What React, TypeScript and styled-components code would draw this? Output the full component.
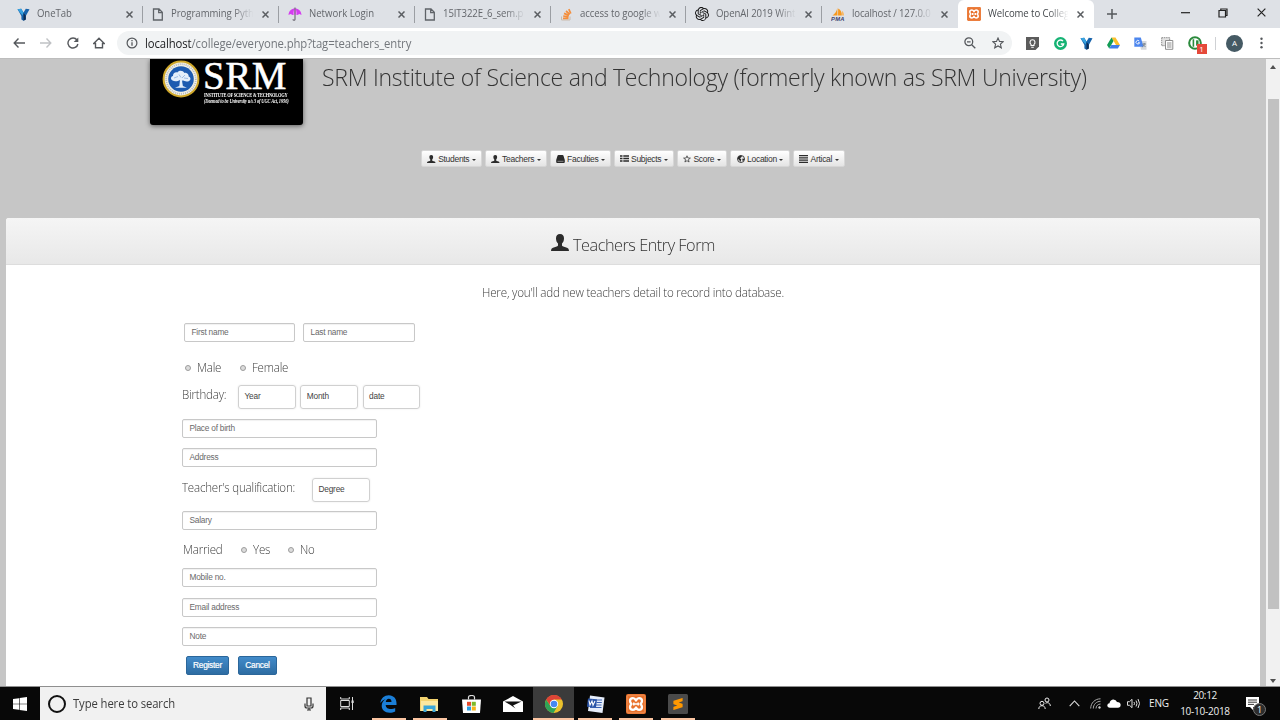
import React from 'react';
import styled, { createGlobalStyle } from 'styled-components';
import { SiOpenai, SiSublimetext } from 'react-icons/si';

const Global = createGlobalStyle`
  * { box-sizing: border-box; }
  body { margin: 0; background: #c6c6c6; overflow: hidden; font-family: "Open Sans", "Noto Sans", sans-serif; }
  svg { display: block; flex: none; }
`;

const Screen = styled.div`
  width: 1280px;
  height: 720px;
  display: flex;
  flex-direction: column;
  overflow: hidden;
`;

/* ---------- shared text ---------- */
const Text = styled.span<{ $size: number; $track?: number; $color?: string; $weight?: number; $narrow?: number }>`
  display: inline-block;
  transform: scaleX(${p => p.$narrow ?? 1});
  transform-origin: left center;
  font-size: ${p => p.$size}px;
  letter-spacing: ${p => p.$track ?? 0}px;
  color: ${p => p.$color ?? '#333'};
  font-weight: ${p => p.$weight ?? 400};
  white-space: nowrap;
  line-height: 1.3;
`;
const Slot = styled.div<{ $w: number; $bg?: string }>`
  flex: none;
  width: ${p => p.$w}px;
  height: 100%;
  display: flex;
  align-items: center;
  justify-content: center;
  background: ${p => p.$bg ?? 'transparent'};
`;

/* ---------- browser chrome ---------- */
const TabStrip = styled.div`
  flex: none;
  height: 28px;
  padding-left: 7.5px;
  background: #dee1e6;
  display: flex;
`;
const Tab = styled.div<{ $active?: boolean; $line?: boolean }>`
  position: relative;
  flex: none;
  width: 135.8px;
  height: 28px;
  display: flex;
  align-items: center;
  padding: 0 10px 0 9px;
  gap: 7px;
  background: ${p => (p.$active ? '#fff' : 'transparent')};
  border-radius: 6px 6px 0 0;
  &::after {
    content: '';
    position: absolute;
    right: 0;
    top: 6px;
    width: 1px;
    height: 17px;
    background: ${p => (p.$line ? '#9b9ea3' : 'transparent')};
  }
`;
const TabTitle = styled.div<{ $fade?: boolean }>`
  flex: 1;
  min-width: 0;
  padding-bottom: 1px;
  display: flex;
  mask-image: ${p => (p.$fade ? 'linear-gradient(90deg, #000 74%, transparent 98%)' : 'none')};
`;
const WindowButtons = styled.div`
  margin-left: auto;
  display: flex;
  padding-bottom: 3px;
`;
const Toolbar = styled.div`
  flex: none;
  height: 31px;
  background: #fff;
  border-bottom: 1px solid #bdbdbd;
  display: flex;
  align-items: center;
  padding-left: 5px;
`;
const AddressBar = styled.div`
  width: 899px;
  height: 24px;
  margin-left: 5px;
  margin-right: 6px;
  border-radius: 12px;
  background: #f1f3f4;
  display: flex;
  align-items: center;
  padding-left: 1px;
`;
const Url = styled.div`
  flex: 1;
  padding-bottom: 2px;
`;
const ExtDivider = styled.div`
  width: 1px;
  height: 13px;
  margin: 0 10px 0 7px;
  background: #cfd1d4;
`;
const Avatar = styled.div`
  width: 17px;
  height: 17px;
  border-radius: 50%;
  background: #455a64;
  display: flex;
  align-items: center;
  justify-content: center;
`;
const Badged = styled.div`
  position: relative;
  width: 14px;
  height: 14px;
`;
const Badge = styled.span`
  position: absolute;
  left: 9px;
  top: 8px;
  width: 10px;
  height: 10px;
  background: #e5493a;
  color: #fff;
  font-size: 8px;
  line-height: 10px;
  text-align: center;
`;

/* ---------- page ---------- */
const Viewport = styled.div`
  height: 627px;
  flex: none;
  display: flex;
`;
const Page = styled.div`
  width: 1266px;
  height: 627px;
  background: #c6c6c6;
  overflow: hidden;
  padding-left: 6px;
`;
const Header = styled.div`
  height: 91px;
  display: flex;
  padding-left: 144px;
`;
const Logo = styled.div`
  flex: none;
  width: 153px;
  height: 66px;
  background: #000;
  border-radius: 0 0 3px 3px;
  box-shadow: 0 1px 5px rgba(0, 0, 0, 0.55);
  display: flex;
  padding: 1px 0 0 12px;
  gap: 3px;
`;
const LogoWords = styled.div`
  display: flex;
  flex-direction: column;
  color: #fff;
  font-family: "Liberation Serif", serif;
  white-space: nowrap;
`;
const LogoBig = styled.span`
  font-size: 39px;
  line-height: 32px;
  letter-spacing: 0.5px;
  -webkit-text-stroke: 0.5px #fff;
`;
const LogoLine = styled.span<{ $italic?: boolean }>`
  width: 96px;
  margin-left: 1px;
  transform: scaleX(${p => (p.$italic ? 0.84 : 0.83)});
  transform-origin: left center;
  font-size: 5.3px;
  line-height: 6px;
  font-weight: 700;
  font-style: ${p => (p.$italic ? 'italic' : 'normal')};
  letter-spacing: ${p => (p.$italic ? -0.16 : -0.22)}px;
`;
const SiteTitle = styled.div`
  margin: 2px 0 0 19px;
`;
const Nav = styled.div`
  height: 68px;
  display: flex;
  gap: 2.9px;
  padding-left: 415px;
`;
const NavButton = styled.div<{ $w: number }>`
  flex: none;
  width: ${p => p.$w}px;
  height: 17px;
  border-radius: 2px;
  background: linear-gradient(#fff, #e4e4e4);
  border: 1px solid #d6d6d6;
  display: flex;
  align-items: center;
  justify-content: center;
  gap: 2.5px;
  color: #333;
  font: 8.5px "Liberation Sans", Arial, sans-serif;
  letter-spacing: -0.3px;
  white-space: nowrap;
`;
const Caret = styled.i`
  border: 2.5px solid transparent;
  border-top-color: #333;
  border-bottom: 0;
  margin-top: 2px;
`;
const Panel = styled.div`
  width: 1254px;
  height: 470px;
  background: #fff;
  border-radius: 3px 3px 0 0;
  overflow: hidden;
`;
const PanelHeading = styled.div`
  height: 47px;
  background: linear-gradient(#f5f5f5, #e8e8e8);
  border-bottom: 1px solid #ddd;
  display: flex;
  align-items: flex-start;
  gap: 4px;
  padding: 16px 0 0 545px;
`;
const Intro = styled.div`
  height: 58px;
  padding: 20px 0 0 476px;
  display: flex;
`;
const Form = styled.div`
  padding-left: 176px;
`;
const Row = styled.div<{ $h: number; $mb: number; $indent?: number }>`
  height: ${p => p.$h}px;
  margin-bottom: ${p => p.$mb}px;
  padding-left: ${p => p.$indent ?? 0}px;
  display: flex;
`;
const Field = styled.div<{ $w?: number }>`
  width: ${p => p.$w ?? 195}px;
  height: 19px;
  border: 1px solid #c8c8c8;
  border-radius: 2px;
  box-shadow: inset 0 1px 1px rgba(0, 0, 0, 0.06);
  padding-left: 6.5px;
  color: #6a6a6a;
  font: 8.3px/17px "Liberation Sans", Arial, sans-serif;
  letter-spacing: -0.22px;
  white-space: nowrap;
`;
const Picker = styled.div`
  width: 57.5px;
  height: 23.5px;
  margin-right: 4.8px;
  border: 1px solid #d0d0d0;
  border-radius: 3px;
  box-shadow: 0 0 2px rgba(0, 0, 0, 0.1);
  padding-left: 5.5px;
  color: #444;
  font: 8.3px/21.5px "Liberation Sans", Arial, sans-serif;
  letter-spacing: -0.2px;
`;
const FormLabel = styled.div<{ $w: number }>`
  width: ${p => p.$w}px;
  line-height: 1;
`;
const Radio = styled.i`
  width: 6px;
  height: 6px;
  margin: 7px 6px 0 0;
  border: 1px solid #9d9d9d;
  border-radius: 50%;
  background: #dcdcdc;
  flex: none;
`;
const Action = styled.div<{ $w: number }>`
  width: ${p => p.$w}px;
  height: 19px;
  margin-right: 9px;
  border-radius: 2px;
  border: 1px solid #2b669a;
  background: linear-gradient(#428bca, #2d6ca2);
  color: #fff;
  font: 8.3px/17px "Liberation Sans", Arial, sans-serif;
  letter-spacing: -0.25px;
  -webkit-text-stroke: 0.2px #fff;
  text-align: center;
`;
const ScrollBar = styled.div`
  width: 14px;
  height: 627px;
  background: #f1f1f1;
  display: flex;
  flex-direction: column;
  align-items: center;
  padding: 6px 0 3px;
`;
const ScrollArrow = styled.i<{ $up?: boolean }>`
  border: 3px solid transparent;
  border-top: ${p => (p.$up ? '0' : '4px solid #505050')};
  border-bottom: ${p => (p.$up ? '4px solid #505050' : '0')};
`;
const ScrollThumb = styled.div`
  width: 11px;
  height: 510px;
  margin: 30px 0 auto;
  background: #c1c1c1;
`;

/* ---------- taskbar ---------- */
const TaskBar = styled.div`
  height: 34px;
  flex: none;
  background: #080808;
  border-top: 1px solid #8f8f8f;
  display: flex;
`;
const SearchBox = styled.div`
  width: 286px;
  background: #f1f1f1;
  display: flex;
  align-items: center;
  padding-left: 8px;
`;
const SearchText = styled.div`
  flex: 1;
  padding-bottom: 3px;
`;
const Cortana = styled.i`
  width: 18px;
  height: 18px;
  border: 2.6px solid #111;
  border-radius: 50%;
  margin-right: 7px;
`;
const TaskItem = styled.div<{ $open?: boolean; $active?: boolean }>`
  position: relative;
  width: 41.3px;
  height: 33px;
  display: flex;
  align-items: center;
  justify-content: center;
  background: ${p => (p.$active ? '#3b3b3b' : 'transparent')};
  &::after {
    content: '';
    position: absolute;
    bottom: 0;
    left: ${p => (p.$active ? 0 : 3.6)}px;
    right: ${p => (p.$active ? 0 : 3.6)}px;
    height: 2px;
    background: ${p => (p.$open ? '#fbc5a2' : 'transparent')};
  }
`;
const Tray = styled.div`
  margin-left: auto;
  margin-right: 6px;
  display: flex;
  height: 33px;
`;
const Clock = styled.div`
  width: 54px;
  display: flex;
  flex-direction: column;
  align-items: center;
  padding-top: 2px;
  gap: 2.5px;
`;
const NoticeWrap = styled.div`
  position: relative;
  width: 14px;
  height: 13px;
`;
const NoticeCount = styled.span`
  position: absolute;
  left: 7px;
  top: 6px;
  width: 13px;
  height: 13px;
  border: 1px solid #777;
  border-radius: 50%;
  background: #2d2d2d;
  color: #fff;
  font-size: 9px;
  line-height: 11px;
  text-align: center;
`;

/* ---------- icons ---------- */
const Cross = ({ s = 7, c = '#5a5d61', w = 1.5 }: { s?: number; c?: string; w?: number }) => (
  <svg width={s} height={s} viewBox="0 0 7 7"><path d="M.5 .5l6 6M6.5 .5l-6 6" stroke={c} strokeWidth={w} /></svg>
);
const YIcon = () => (
  <svg width="13" height="13" viewBox="0 0 13 13">
    <path d="M.5 1.200L4.200 .8 6.500 4.500 8.800 .8 12.500 1.200 8.800 8v3.600L6.500 12.700 4.400 11.500V8z" fill="#1763ab" />
    <path d="M.5 1.200L4.200 .8 6.500 4.700 5.500 7.500z" fill="#38a3e0" />
    <path d="M6.500 5l2.300 2.500v4.100L6.500 12.700z" fill="#0c2c55" />
  </svg>
);
const PageIcon = () => (
  <svg width="12" height="13" viewBox="0 0 12 13">
    <path d="M1.500 1h5.500l3.300 3.300V12H1.500zM6.700 1v3.600h3.600" fill="none" stroke="#5f6368" strokeWidth="1.300" />
  </svg>
);
const Umbrella = () => (
  <svg width="14" height="14" viewBox="0 0 14 14">
    <path d="M.5 8C.8 4 3.500 1.600 7 1.600S13.200 4 13.500 8l-2-1-2.200 1L7 7 4.700 8 2.500 7z" fill="#d43df0" />
    <path d="M5 7.500C5 4.500 6 2.500 7 1.600 8 2.500 9 4.500 9 7.500L7 7z" fill="#f07bff" />
    <path d="M7 .6V12.200c0 1.400-2 1.300-2 0" fill="none" stroke="#6a6670" strokeWidth="1.100" />
  </svg>
);
const StackIcon = () => (
  <svg width="13" height="13" viewBox="0 0 13 13" fill="none">
    <path d="M1.500 8.500V12h8.500V8.500" stroke="#c9bcae" strokeWidth="1" />
    <path d="M3 10.300h5.500M3.200 8l5.400 .8M4 5.400l5 2M6 3l3.800 3.400M8.800 1.200l2 4.300" stroke="#f48e3c" strokeWidth="1.700" />
  </svg>
);
const PmaIcon = () => (
  <svg width="14" height="14" viewBox="0 0 14 14">
    <path d="M6.300 .8C6 4 4 7 1.500 8.400h5zM7.200 1.500c2.800 1.500 3.800 4 3.600 6.900H7z" fill="#f7981d" />
    <path d="M11 4c1.500 1 2 2.600 1.900 4.400h-1.700z" fill="#f9b55c" />
    <text x="0" y="13.600" fontSize="5.800" fontWeight="700" fontStyle="italic" fontFamily="Liberation Sans" fill="#3b3f70" textLength="13.500">PMA</text>
  </svg>
);
const XamppIcon = ({ s }: { s: number }) => (
  <svg width={s} height={s} viewBox="0 0 20 20">
    <rect width="20" height="20" rx="2" fill="#e9712b" />
    <rect x="1.200" y="1.200" width="17.600" height="17.600" rx="1.500" fill="none" stroke="#f3a271" strokeWidth=".6" />
    <path d="M7 4.200C4.800 4.200 4 5.600 4 7c0 1.300.7 2.200 1.500 3C4.700 10.800 4 11.700 4 13c0 1.400.8 2.800 3 2.800 1.700 0 2.300-1.200 3-2.300.7 1.100 1.300 2.300 3 2.300 2.200 0 3-1.400 3-2.800 0-1.300-.7-2.200-1.500-3 .8-.8 1.500-1.700 1.500-3 0-1.400-.8-2.800-3-2.800-1.700 0-2.300 1.200-3 2.300-.7-1.100-1.300-2.300-3-2.300z" fill="none" stroke="#fff" strokeWidth="2.300" strokeLinejoin="round" />
    <path d="M7.800 10h4.400M7.800 8.600v2.800M12.200 8.600v2.800" stroke="#fff" strokeWidth="1.500" />
  </svg>
);
const Person = ({ w, h, c = '#2b2b2b' }: { w: number; h: number; c?: string }) => (
  <svg width={w} height={h} viewBox="0 0 18 17" fill={c}>
    <path d="M9 0C6.300 0 5 1.800 5 4.300c0 2.300.8 4.300 2 5.300v1.600c0 .7-.5 1-1.300 1.300L2 13.800C.6 14.300.2 15 0 17h18c-.2-2-.6-2.700-2-3.200l-3.700-1.300c-.8-.3-1.300-.6-1.300-1.300V9.600c1.200-1 2-3 2-5.300C13 1.800 11.700 0 9 0z" />
  </svg>
);
const NavIcon = ({ kind }: { kind: string }) => {
  if (kind === 'user') return <Person w={8.5} h={8} />;
  if (kind === 'book') return (
    <svg width="9" height="8" viewBox="0 0 9 8"><path d="M2.500 0h4q.8 0 1 .8L8.800 5v2q0 1-1 1H1.200q-1 0-1-1V5L1.500 .8Q1.700 0 2.500 0z" fill="#2b2b2b" /><path d="M1.500 6.300h6" stroke="#ccc" strokeWidth=".6" /></svg>
  );
  if (kind === 'list') return (
    <svg width="9" height="7" viewBox="0 0 9 7"><path d="M0 1h2.500M3.300 1H9M0 3.500h2.500M3.300 3.500H9M0 6h2.500M3.300 6H9" stroke="#2b2b2b" strokeWidth="1.600" /></svg>
  );
  if (kind === 'star') return (
    <svg width="8" height="8" viewBox="0 0 8 8"><path d="M4 .8l.9 2.200 2.500.1-2 1.500.7 2.400L4 5.700 1.900 7l.7-2.400-2-1.500 2.500-.1z" fill="none" stroke="#333" strokeWidth=".75" /></svg>
  );
  if (kind === 'globe') return (
    <svg width="8" height="8" viewBox="0 0 8 8"><circle cx="4" cy="4" r="3.500" fill="#eee" stroke="#2b2b2b" strokeWidth=".9" /><path d="M1 2l2-1.500 2 .5-.7 1.200L3 3.200l1.300 1L3.500 7 2.200 5 .6 3.600zM5.500 3.500l2 .5L6 6.500 5.300 5z" fill="#2b2b2b" /></svg>
  );
  return <svg width="9" height="8" viewBox="0 0 9 8"><path d="M0 .7h9M0 2.900h9M0 5.100h9M0 7.300h9" stroke="#2b2b2b" strokeWidth="1.200" /></svg>;
};
const Seal = () => (
  <svg width="38" height="38" viewBox="0 0 38 38">
    <circle cx="19" cy="19" r="17.400" fill="#f4f1e4" stroke="#cfa72a" strokeWidth="2" />
    <circle cx="19" cy="19" r="14.800" fill="none" stroke="#b4bac4" strokeWidth="1.800" strokeDasharray="1 1" />
    <circle cx="19" cy="19" r="12.800" fill="#1d5bb0" />
    <path d="M18 20c-3 2-8.500 1.500-9-1.200-.3-1.600 1-2.500 2-2.700-.3-3 2.500-4.300 4.300-3.600 1.500-2.600 6-2.300 7 .4 2.400-.3 4.800 1.500 4.300 3.700 2 .5 2.600 3.300.6 4.300-2 .9-4.700.6-6.700-.6l-.4 1.200.8 4.600 4 1.600H13l4.300-1.800z" fill="#e3eefa" />
    <path d="M12 18l4-1.500M17 14.500l2 3M23 15l-3 3M26 18.500l-4-.5" stroke="#6f9bd4" strokeWidth=".6" />
  </svg>
);

const tabs = [
  { t: 'OneTab', icon: <YIcon />, track: -0.1 },
  { t: 'Programming Pyth', icon: <PageIcon />, fade: true, track: -0.05 },
  { t: 'Network Login', icon: <Umbrella />, track: 0 },
  { t: '15IT322E_6_sem.p', icon: <PageIcon />, fade: true, track: -0.1 },
  { t: 'access to google w', icon: <StackIcon />, fade: true, track: -0.1 },
  { t: 'OpenAI 2019 Wint', icon: <SiOpenai size={14} color="#111" />, fade: true, track: -0.1 },
  { t: 'localhost / 127.0.0', icon: <PmaIcon />, fade: true, track: -0.15 },
];
const navItems: [string, string, number][] = [
  ['Students', 'user', 61], ['Teachers', 'user', 62], ['Faculties', 'book', 61], ['Subjects', 'list', 60],
  ['Score', 'star', 50.5], ['Location', 'globe', 60], ['Artical', 'lines', 52],
];

const FieldRow = ({ label, mb }: { label: string; mb: number }) => (
  <Row $h={19} $mb={mb}><Field>{label}</Field></Row>
);
const Label = ({ children }: { children: string }) => (
  <Text $size={12.4} $weight={300} $track={-0.2} $narrow={0.93} $color="#3c3c3c">{children}</Text>
);

export default function App() {
  return (
    <Screen>
      <Global />
      <TabStrip>
        {tabs.map((t, i) => (
          <Tab key={i} $line={i < 6}>
            {t.icon}
            <TabTitle $fade={t.fade}><Text $size={10} $track={t.track} $narrow={0.96} $color="#63666b">{t.t}</Text></TabTitle>
            <Cross />
          </Tab>
        ))}
        <Tab $active>
          <XamppIcon s={14} />
          <TabTitle $fade><Text $size={10} $track={-0.1} $narrow={0.96} $color="#45494d">Welcome to Colleg</Text></TabTitle>
          <Cross />
        </Tab>
        <Slot $w={36}><svg width="10" height="10" viewBox="0 0 10 10"><path d="M5 0v10M0 5h10" stroke="#55585c" strokeWidth="1.500" /></svg></Slot>
        <WindowButtons>
          <Slot $w={38}><svg width="9" height="2"><path d="M0 .7h9" stroke="#222" strokeWidth="1.200" /></svg></Slot>
          <Slot $w={38}><svg width="10" height="10" viewBox="0 0 10 10"><path d="M1 2.500h6.500V9H1zM2.800 2.300V1H9v6.500H7.700" fill="none" stroke="#222" strokeWidth="1.200" /></svg></Slot>
          <Slot $w={38}><Cross s={9} c="#222" w={0.9} /></Slot>
        </WindowButtons>
      </TabStrip>
      <Toolbar>
        <Slot $w={27}><svg width="12" height="10" viewBox="0 0 12 10"><path d="M5.500 .6L1.200 5l4.300 4.400M1.400 5H12" fill="none" stroke="#55585c" strokeWidth="1.400" /></svg></Slot>
        <Slot $w={27}><svg width="12" height="10" viewBox="0 0 12 10"><path d="M6.500 .6L10.800 5 6.500 9.400M10.600 5H0" fill="none" stroke="#c0c2c5" strokeWidth="1.400" /></svg></Slot>
        <Slot $w={27}><svg width="12" height="12" viewBox="0 0 12 12"><path d="M10 3A5 5 0 1 0 10.900 7" fill="none" stroke="#55585c" strokeWidth="1.400" /><path d="M11.300 .5v4.600H6.700z" fill="#55585c" /></svg></Slot>
        <Slot $w={26}><svg width="12" height="12" viewBox="0 0 12 12"><path d="M.7 6.500L6 1.200l5.300 5.300H9.500v4.300h-7V6.500z" fill="none" stroke="#55585c" strokeWidth="1.400" /></svg></Slot>
        <AddressBar>
          <Slot $w={27}><svg width="12" height="12" viewBox="0 0 12 12"><circle cx="6" cy="6" r="4.900" fill="none" stroke="#55585c" strokeWidth="1.200" /><path d="M6 5.300v3.400M6 3.100v1.200" stroke="#55585c" strokeWidth="1.300" /></svg></Slot>
          <Url><Text $size={12} $track={-0.1} $narrow={0.943} $color="#73777c"><Text as="b" $size={12} $track={-0.1} $color="#202124">localhost</Text>/college/everyone.php?tag=teachers_entry</Text></Url>
          <Slot $w={28}><svg width="12" height="12" viewBox="0 0 12 12"><circle cx="4.800" cy="4.800" r="3.900" fill="none" stroke="#55585c" strokeWidth="1.300" /><path d="M7.700 7.700l3.600 3.600M3 4.800h3.600" stroke="#55585c" strokeWidth="1.300" /></svg></Slot>
          <Slot $w={28}><svg width="12" height="12" viewBox="0 0 12 12"><path d="M6 1l1.500 3.400 3.700.3-2.800 2.500.9 3.600L6 8.900l-3.300 1.900.9-3.600L.8 4.700l3.700-.3z" fill="none" stroke="#55585c" strokeWidth="1.100" /></svg></Slot>
        </AddressBar>
        <Slot $w={29}><svg width="13" height="13" viewBox="0 0 13 13"><path d="M0 0h13v9.500L9.500 13H0z" fill="#5b5b5b" /><path d="M5 8.500V7.400C3.300 6 3.800 2.700 6.500 2.700S9.700 6 8 7.400v1.100zM5.200 10.300h2.600" fill="none" stroke="#fff" strokeWidth="1.100" /></svg></Slot>
        <Slot $w={26}><svg width="13" height="13" viewBox="0 0 13 13"><circle cx="6.500" cy="6.500" r="6.500" fill="#15b374" /><path d="M9 4.200A3.300 3.300 0 1 0 9.700 7H6.800" fill="none" stroke="#fff" strokeWidth="1.300" /></svg></Slot>
        <Slot $w={27}><YIcon /></Slot>
        <Slot $w={27}><svg width="13" height="12" viewBox="0 0 13 12"><path d="M4.500 .5h4L13 8H9z" fill="#fbc02d" /><path d="M4.500 .5L6.500 4 2.200 11.500 0 8z" fill="#129c55" /><path d="M4.300 8H13l-2.200 3.500H2.300z" fill="#3f7de8" /></svg></Slot>
        <Slot $w={27}><svg width="13" height="13" viewBox="0 0 13 13"><path d="M5 4h7.500v8.700H7z" fill="#d5d8dc" /><path d="M.3.5h6.500l2.700 9.300H.3z" fill="#4c86ee" /><path d="M5.200 4A1.800 1.800 0 1 0 5.600 5.700H4" fill="none" stroke="#fff" strokeWidth=".9" /><path d="M8.500 7h3.500M10.200 6v1c0 1-1 2.500-2 3M9 7.500l2.500 2.500" stroke="#6b7784" strokeWidth=".8" fill="none" /></svg></Slot>
        <Slot $w={27}><svg width="13" height="13" viewBox="0 0 13 13"><path d="M.7.7h8v8h-8z" fill="#e2e2e2" stroke="#8d8d8d" strokeDasharray="1.500 .7" /><path d="M4.500 3.500h7.300v8.800H4.500z" fill="#fff" stroke="#8d8d8d" /><path d="M6 6h4.500M6 8h4.500M6 10h4.500" stroke="#8d8d8d" /></svg></Slot>
        <Slot $w={27}><Badged><svg width="14" height="14" viewBox="0 0 13 13"><circle cx="6.500" cy="6.500" r="5.400" fill="#fff" stroke="#2b8a3c" strokeWidth="1.900" /><path d="M5 3v7" stroke="#2b8a3c" strokeWidth="1.500" /><path d="M7.500 4h2.300v5H7.500z" fill="#2b8a3c" /></svg><Badge>1</Badge></Badged></Slot>
        <ExtDivider />
        <Avatar><Text $size={8} $color="#fff">A</Text></Avatar>
        <Slot $w={37}><svg width="3" height="12" viewBox="0 0 3 12" fill="#55585c"><circle cx="1.500" cy="1.700" r="1.200" /><circle cx="1.500" cy="6" r="1.200" /><circle cx="1.500" cy="10.300" r="1.200" /></svg></Slot>
      </Toolbar>

      <Viewport>
        <Page>
          <Header>
            <Logo>
              <Seal />
              <LogoWords>
                <LogoBig>SRM</LogoBig>
                <LogoLine>INSTITUTE OF SCIENCE &amp; TECHNOLOGY</LogoLine>
                <LogoLine $italic>(Deemed to be University u/s 3 of UGC Act, 1956)</LogoLine>
              </LogoWords>
            </Logo>
            <SiteTitle><Text $size={24.5} $weight={300} $track={-0.3} $narrow={0.94}>SRM Institute of Science and Technology (formerly known as SRM University)</Text></SiteTitle>
          </Header>
          <Nav>
            {navItems.map(([t, k, w]) => (
              <NavButton key={t} $w={w}><NavIcon kind={k} />{t}<Caret /></NavButton>
            ))}
          </Nav>
          <Panel>
            <PanelHeading>
              <Person w={18} h={17} />
              <Text $size={17} $weight={300} $track={-0.5} $narrow={0.957}>Teachers Entry Form</Text>
            </PanelHeading>
            <Intro><Text $size={12.4} $weight={300} $track={-0.2} $narrow={0.938} $color="#3c3c3c">Here, you'll add new teachers detail to record into database.</Text></Intro>
            <Form>
              <Row $h={18} $mb={17} $indent={2}>
                <Field $w={111}>First name</Field>
                <Slot $w={8} />
                <Field $w={112}>Last name</Field>
              </Row>
              <Row $h={20} $mb={7} $indent={3}>
                <Radio /><FormLabel $w={43}><Label>Male</Label></FormLabel>
                <Radio /><FormLabel $w={40}><Label>Female</Label></FormLabel>
              </Row>
              <Row $h={24} $mb={10}>
                <FormLabel $w={56}><Label>Birthday:</Label></FormLabel>
                <Picker>Year</Picker><Picker>Month</Picker><Picker>date</Picker>
              </Row>
              <FieldRow label="Place of birth" mb={10} />
              <FieldRow label="Address" mb={11} />
              <Row $h={24} $mb={9}>
                <FormLabel $w={130}><Label>Teacher's qualification:</Label></FormLabel>
                <Picker>Degree</Picker>
              </Row>
              <FieldRow label="Salary" mb={10} />
              <Row $h={20} $mb={8} $indent={1}>
                <FormLabel $w={58}><Label>Married</Label></FormLabel>
                <Radio /><FormLabel $w={35}><Label>Yes</Label></FormLabel>
                <Radio /><FormLabel $w={30}><Label>No</Label></FormLabel>
              </Row>
              <FieldRow label="Mobile no." mb={11} />
              <FieldRow label="Email address" mb={10} />
              <FieldRow label="Note" mb={10} />
              <Row $h={19} $mb={0} $indent={4}>
                <Action $w={43}>Register</Action>
                <Action $w={39}>Cancel</Action>
              </Row>
            </Form>
          </Panel>
        </Page>
        <ScrollBar><ScrollArrow $up /><ScrollThumb /><ScrollArrow /></ScrollBar>
      </Viewport>

      <TaskBar>
        <Slot $w={40}><svg width="14" height="14" viewBox="0 0 14 14" fill="#fff"><path d="M0 2l6-.8v5.500H0zM6.600 1.100L14 0v6.700H6.600zM0 7.300h6v5.500L0 12zM6.600 7.300H14V14l-7.400-1.100z" /></svg></Slot>
        <SearchBox>
          <Cortana />
          <SearchText><Text $size={12} $track={-0.1} $narrow={0.94} $color="#3c3c3c">Type here to search</Text></SearchText>
          <Slot $w={34}><svg width="10" height="14" viewBox="0 0 10 14"><path d="M3 1h4v8H3zM1 6.500V9q0 2 2 2h4q2 0 2-2V6.500M5 11v2.500M3 13h4" fill="none" stroke="#333" strokeWidth="1.200" /></svg></Slot>
        </SearchBox>
        <Slot $w={42}><svg width="14" height="13" viewBox="0 0 14 13"><path d="M.7 3.500h8.600v6H.7zM.7 0v2h8.600V0M.7 13v-2h8.600v2M12.500 0v13" fill="none" stroke="#ddd" strokeWidth="1" /><path d="M11.500 3.500h2.200v2.500h-2.200z" fill="#ddd" /></svg></Slot>
        <TaskItem $open><svg width="17" height="18" viewBox="0 0 17 18"><path d="M.3 8C1 3.300 4.300.3 8.800.3c5 0 7.700 3.700 7.700 7.800v2H5.700c.2 3 2.500 4 5 4 1.700 0 3.300-.5 4.500-1.200v3.600c-1.500.9-3.500 1.300-5.500 1.300-5 0-8-3-8-7 0-3 1.700-5.500 4-6.600C3.500 4.800 1.700 6 .3 8zm5.500-1h5.700c0-2-1-3.200-2.700-3.200S6 5.200 5.800 7z" fill="#1b7fd8" /></svg></TaskItem>
        <TaskItem $open><svg width="19" height="16" viewBox="0 0 19 16"><path d="M0 1h7l1.500 2H18v12H0z" fill="#f3d36f" /><path d="M1 5h17v10H1z" fill="#fbe8a0" /><path d="M3.500 9.500h12V16h-3v-3H6.500v3h-3z" fill="#3aa6d8" /></svg></TaskItem>
        <TaskItem><svg width="19" height="18" viewBox="0 0 19 18"><path d="M0 4.500h19L18 18H1z" fill="#fff" /><path d="M6.500 4.500V2q0-1.500 3-1.500t3 1.500v2.500" fill="none" stroke="#ddd" strokeWidth="1.200" /><path d="M5 6.800h4v4H5z" fill="#e5492b" /><path d="M9.800 6.800h4v4h-4z" fill="#7db927" /><path d="M5 11.500h4v4H5z" fill="#2a9de0" /><path d="M9.800 11.500h4v4h-4z" fill="#f5b51b" /></svg></TaskItem>
        <TaskItem><svg width="20" height="16" viewBox="0 0 20 16"><path d="M0 5.500L10 0l10 5.500V16H0z" fill="#fff" /><path d="M1.500 5.500h17L10 9.500l2.500 3-5-3.500z" fill="#111" /></svg></TaskItem>
        <TaskItem $open $active><svg width="18" height="18" viewBox="0 0 18 18"><circle cx="9" cy="9" r="9" fill="#eac12d" /><path d="M1.200 4.500A9 9 0 0 0 8.500 18L12.500 11H5.500z" fill="#2fa457" /><path d="M9 4.500h7.800A9 9 0 0 0 1.200 4.500L5.500 11z" fill="#dc4437" /><circle cx="9" cy="9" r="4.200" fill="#fff" /><circle cx="9" cy="9" r="3.300" fill="#4688f1" /></svg></TaskItem>
        <TaskItem $open><svg width="19" height="18" viewBox="0 0 19 18"><path d="M4 .5L18.500 2.500 16.500 18 2 16z" fill="#e7eefb" /><path d="M10.500 5h5.500M10.500 7.500h5.300M9.500 10h6M4 12.500h11.500" stroke="#3b63b5" strokeWidth="1.100" /><path d="M2 3.500l9 .8-1 8.200-9-.8z" fill="#2b55a8" /><path d="M3 5.500l1 4.500 2-4 1 4.300 2-4.300" fill="none" stroke="#fff" strokeWidth="1.100" /></svg></TaskItem>
        <TaskItem $open><XamppIcon s={20} /></TaskItem>
        <TaskItem $open><svg width="20" height="20" viewBox="0 0 20 20"><rect width="20" height="20" rx="1.500" fill="#4a4a4a" /><g transform="translate(4 4) scale(.5)"><SiSublimetext size={24} color="#ff9800" /></g></svg></TaskItem>
        <Tray>
          <Slot $w={30}><svg width="13" height="13" viewBox="0 0 13 13" fill="none" stroke="#eee"><circle cx="9" cy="3" r="2" /><circle cx="4" cy="6.300" r="2" /><path d="M.8 12c0-2 1.200-3.300 3.200-3.300S7.200 10 7.200 12M7.500 6.300c2.500-1.500 4.800 0 4.800 2.700" /></svg></Slot>
          <Slot $w={30}><svg width="11" height="7" viewBox="0 0 11 7"><path d="M.7 6.200L5.500 1l4.800 5.200" fill="none" stroke="#ddd" strokeWidth="1.100" /></svg></Slot>
          <Slot $w={13}><svg width="11" height="11" viewBox="0 0 11 11" fill="none" stroke="#aaa"><path d="M.7 10.500C.7 5 5 .8 10.500 .8M3.300 10.500c0-4 3.200-7.200 7.200-7.200M6 10.500C6 8 8 6 10.500 6" /><circle cx="9.500" cy="9.500" r=".9" fill="#ddd" /></svg></Slot>
          <Slot $w={24}><svg width="14" height="9" viewBox="0 0 14 9"><path d="M3 8.800Q.3 8.600.3 6.300 .5 4.300 2.500 4.200 3 1 6 .5q3-.2 4 2.600 3.500.2 3.700 3 0 2.500-2.500 2.700z" fill="#fff" /></svg></Slot>
          <Slot $w={14}><svg width="13" height="11" viewBox="0 0 13 11" fill="none" stroke="#ddd"><path d="M.5 3.700h2L5 1.300v8.400L2.500 7.300h-2zM7 4q1 1.500 0 3M9 2.500q2 3 0 6M11 1q3 4.500 0 9" /></svg></Slot>
          <Slot $w={38}><Text $size={10} $track={-0.1} $color="#eee">ENG</Text></Slot>
          <Clock>
            <Text $size={10} $track={-0.35} $color="#eee">20:12</Text>
            <Text $size={10} $track={-0.25} $color="#eee">10-10-2018</Text>
          </Clock>
          <Slot $w={42}><NoticeWrap><svg width="13" height="13" viewBox="0 0 13 13"><path d="M0 0h13v10H7v3l-3-3H0z" fill="#fff" /><path d="M2 3h9M2 5.200h9M2 7.400h6" stroke="#222" strokeWidth=".9" /></svg><NoticeCount>1</NoticeCount></NoticeWrap></Slot>
        </Tray>
      </TaskBar>
    </Screen>
  );
}
